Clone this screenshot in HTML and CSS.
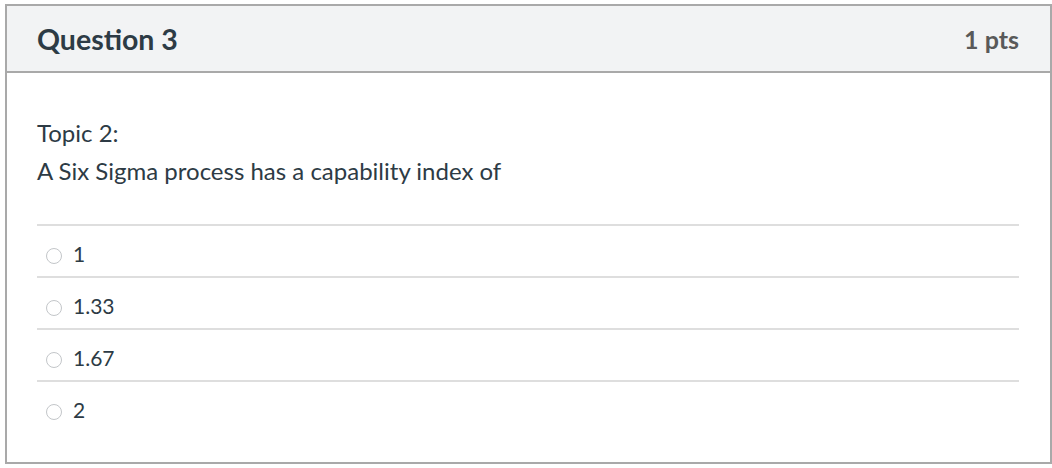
FILE: index.html
```html
<!DOCTYPE html>
<html>
<head>
<meta charset="utf-8">
<link rel="stylesheet" href="styles.css">
</head>
<body>
<div class="question">
  <div class="header">
    <span class="title">Question 3</span>
    <span class="points">1 pts</span>
  </div>
  <div class="content">
    <div class="text">Topic 2:<br>A Six Sigma process has a capability index of</div>
    <div class="answers">
      <label class="answer"><span class="radio"></span><span class="label">1</span></label>
      <label class="answer"><span class="radio"></span><span class="label">1.33</span></label>
      <label class="answer"><span class="radio"></span><span class="label">1.67</span></label>
      <label class="answer"><span class="radio"></span><span class="label">2</span></label>
    </div>
  </div>
</div>
</body>
</html>
```
FILE: styles.css
```css
html, body {
  background: #ffffff;
}
body {
  margin: 4px 0 4px 5px;
  font-family: Lato, "Open Sans", sans-serif;
  color: #2d3b45;
}
.question {
  border: 2px solid #a9a9a9;
  background: #fff;
}
.header {
  height: 65px;
  background: #f2f3f4;
  border-bottom: 2px solid #a9a9a9;
  display: flex;
  justify-content: space-between;
  align-items: center;
  padding: 0 31px 0 30px;
}
.title {
  font-size: 28.5px;
  font-weight: 700;
  color: #2d3b45;
}
.points {
  font-size: 25px;
  font-weight: 700;
  color: #595959;
}
.content {
  padding: 41px 31px 30px 30px;
}
.text {
  font-size: 24px;
  line-height: 37.5px;
}
.answers {
  margin-top: 35px;
}
.answer {
  display: flex;
  align-items: center;
  border-top: 2px solid #dedede;
  padding-top: 6px;
  height: 44px;
  font-size: 21px;
}
.radio {
  width: 16px;
  height: 16px;
  box-sizing: border-box;
  border: 1px solid #c3c6c9;
  border-radius: 50%;
  background: #fff;
  margin: 4px 11px 0 9px;
}
.label {
  line-height: 44px;
}
```
